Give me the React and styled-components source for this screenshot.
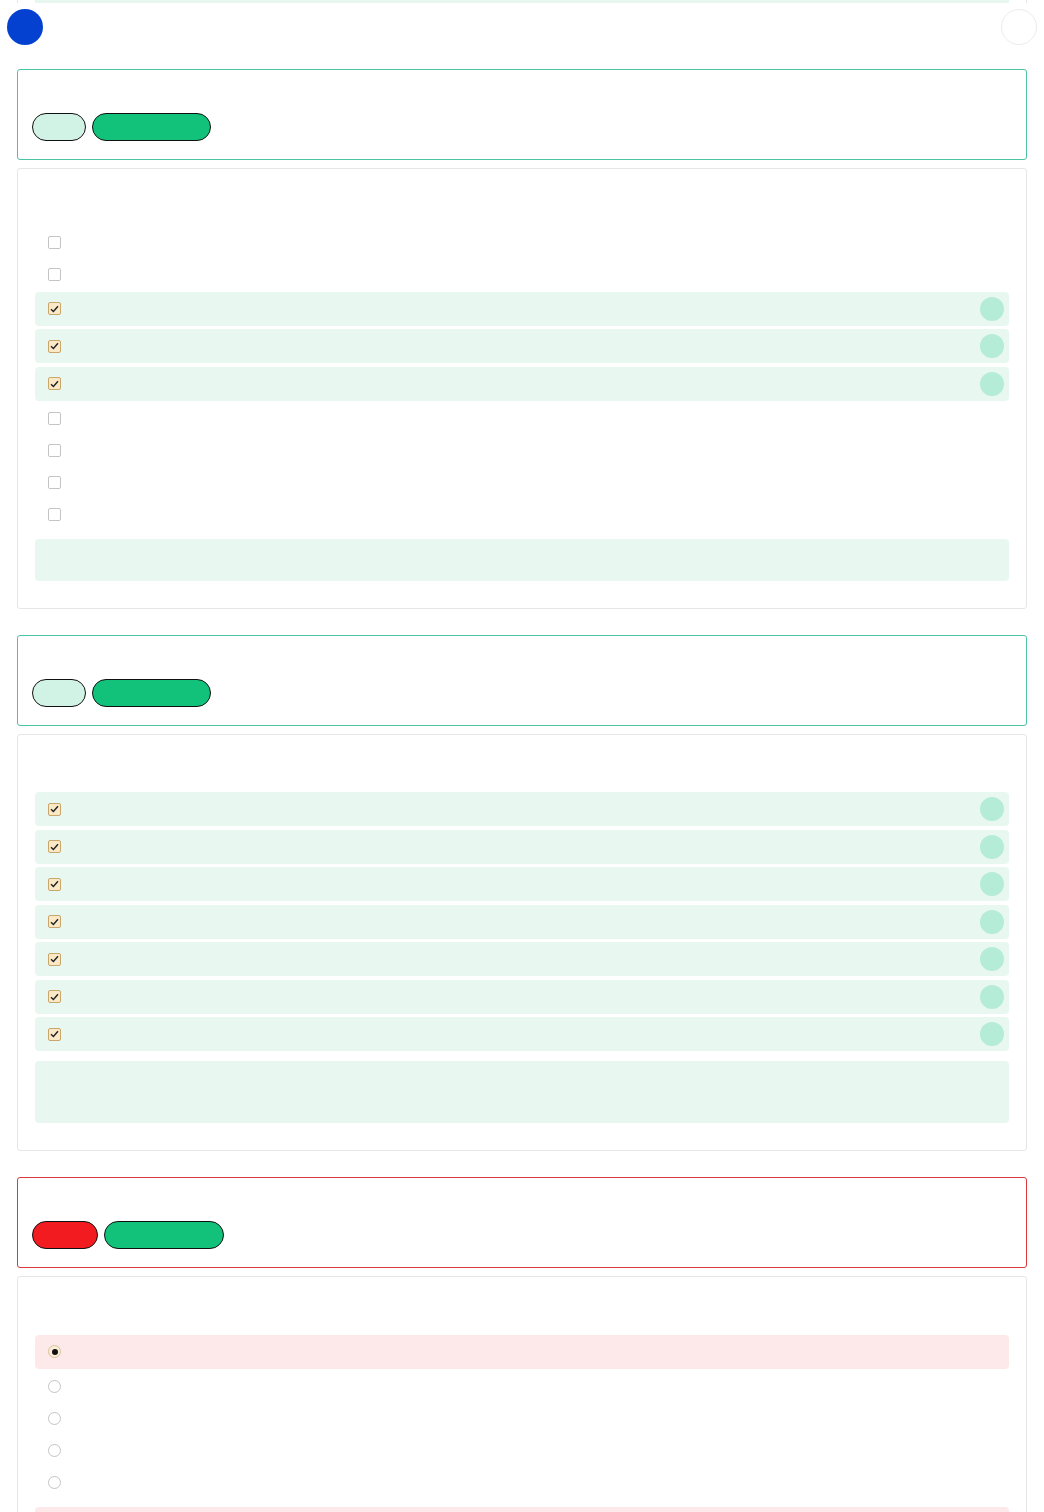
import React from 'react';
import styled, { createGlobalStyle } from 'styled-components';

const GlobalStyle = createGlobalStyle`
  body {
    margin: 0;
    background: #fff;
    font-family: "Liberation Sans", Arial, sans-serif;
  }
`;

const Page = styled.div`
  width: 1044px;
  height: 1512px;
  overflow: hidden;
`;

const PrevTail = styled.div`
  margin: 0 17px;
  height: 3px;
  border-left: 1px solid #e6e6e6;
  border-right: 1px solid #e6e6e6;
  padding: 0 17px;
  box-sizing: border-box;
  & > div {
    height: 3px;
    background: #e8f8f1;
  }
`;

const TopBar = styled.div`
  display: flex;
  justify-content: space-between;
  align-items: center;
  padding: 6px 7px 0;
  height: 36px;
`;

const Avatar = styled.div`
  width: 36px;
  height: 36px;
  border-radius: 50%;
  background: #0441d1;
`;

const GhostCircle = styled.div`
  width: 34px;
  height: 34px;
  border-radius: 50%;
  border: 1px solid #ececec;
  background: #fff;
`;

const Stack = styled.div`
  padding: 24px 17px 0;
`;

const Header = styled.div`
  height: 91px;
  box-sizing: border-box;
  border: 1px solid ${(p) => (p.$wrong ? '#d9393c' : '#4cc3a5')};
  border-radius: 3px;
  padding: 43px 14px 0;
  display: flex;
  gap: 6px;
  align-items: flex-start;
`;

const Pill = styled.div`
  height: 28px;
  box-sizing: border-box;
  width: ${(p) => p.$w}px;
  border: 1px solid #111;
  border-radius: 14px;
  background: ${(p) => p.$bg};
`;

const Body = styled.div`
  margin-top: 8px;
  margin-bottom: 26px;
  border: 1px solid #e6e6e6;
  border-radius: 3px;
  padding: 0 17px 27px;
`;

const Question = styled.div`
  height: ${(p) => p.$h}px;
  color: transparent;
`;

const List = styled.div`
  display: flex;
  flex-direction: column;
`;

const Option = styled.div`
  display: flex;
  align-items: center;
  justify-content: space-between;
  padding: 0 5px 0 13px;
  border-radius: 4px;
  height: ${(p) => (p.$hl ? 34 : 32)}px;
  margin: ${(p) => (p.$hl ? '1.5px 0 2px' : '0')};
  background: ${(p) => (p.$hl ? p.$hl : 'transparent')};
  color: transparent;
`;

const Box = styled.span`
  width: 11px;
  height: 11px;
  border: 1px solid ${(p) => (p.$on ? '#c9a76b' : '#c4c4c4')};
  border-radius: 2px;
  background: ${(p) => (p.$on ? '#fbe8c6' : '#fff')};
  display: flex;
  align-items: center;
  justify-content: center;
`;

const Radio = styled.span`
  width: 11px;
  height: 11px;
  border: 1px solid ${(p) => (p.$on ? '#d9c29a' : '#c4c4c4')};
  border-radius: 50%;
  background: ${(p) => (p.$on ? '#fbeed6' : '#fff')};
  display: flex;
  align-items: center;
  justify-content: center;
  &::after {
    content: '';
    display: ${(p) => (p.$on ? 'block' : 'none')};
    width: 6px;
    height: 6px;
    border-radius: 50%;
    background: #111;
  }
`;

const Dot = styled.span`
  width: 24px;
  height: 24px;
  border-radius: 50%;
  background: #b4ecd7;
`;

const Feedback = styled.div`
  margin-top: ${(p) => p.$gap}px;
  height: ${(p) => p.$h}px;
  border-radius: 4px;
  background: ${(p) => p.$bg};
`;

const Check = () => (
  <svg width="9" height="8" viewBox="0 0 9 8">
    <path d="M1 4.2 L3.4 6.5 L8 1.2" fill="none" stroke="#222" strokeWidth="1.4" />
  </svg>
);

function CheckItem({ on }) {
  return (
    <Option $hl={on ? '#e8f8f1' : null}>
      <Box $on={on}>{on && <Check />}</Box>
      {on && <Dot />}
    </Option>
  );
}

function Question1() {
  const items = [false, false, true, true, true, false, false, false, false];
  return (
    <>
      <Header>
        <Pill $w={54} $bg="#d1f3e5" />
        <Pill $w={119} $bg="#12c27b" />
      </Header>
      <Body>
        <Question $h={57} />
        <List>
          {items.map((on, i) => (
            <CheckItem key={i} on={on} />
          ))}
        </List>
        <Feedback $gap={8} $h={42} $bg="#e8f8f1" />
      </Body>
    </>
  );
}

function Question2() {
  const items = [true, true, true, true, true, true, true];
  return (
    <>
      <Header>
        <Pill $w={54} $bg="#d1f3e5" />
        <Pill $w={119} $bg="#12c27b" />
      </Header>
      <Body>
        <Question $h={56} />
        <List>
          {items.map((on, i) => (
            <CheckItem key={i} on={on} />
          ))}
        </List>
        <Feedback $gap={8} $h={62} $bg="#e8f8f1" />
      </Body>
    </>
  );
}

function Question3() {
  const items = [true, false, false, false, false];
  return (
    <>
      <Header $wrong>
        <Pill $w={66} $bg="#f21c20" />
        <Pill $w={120} $bg="#12c27b" />
      </Header>
      <Body>
        <Question $h={56} />
        <List>
          {items.map((on, i) => (
            <Option key={i} $hl={on ? '#fde9ea' : null}>
              <Radio $on={on} />
            </Option>
          ))}
        </List>
        <Feedback $gap={8} $h={60} $bg="#fde9ea" />
      </Body>
    </>
  );
}

export default function App() {
  return (
    <Page>
      <GlobalStyle />
      <PrevTail>
        <div />
      </PrevTail>
      <TopBar>
        <Avatar />
        <GhostCircle />
      </TopBar>
      <Stack>
        <Question1 />
        <Question2 />
        <Question3 />
      </Stack>
    </Page>
  );
}
